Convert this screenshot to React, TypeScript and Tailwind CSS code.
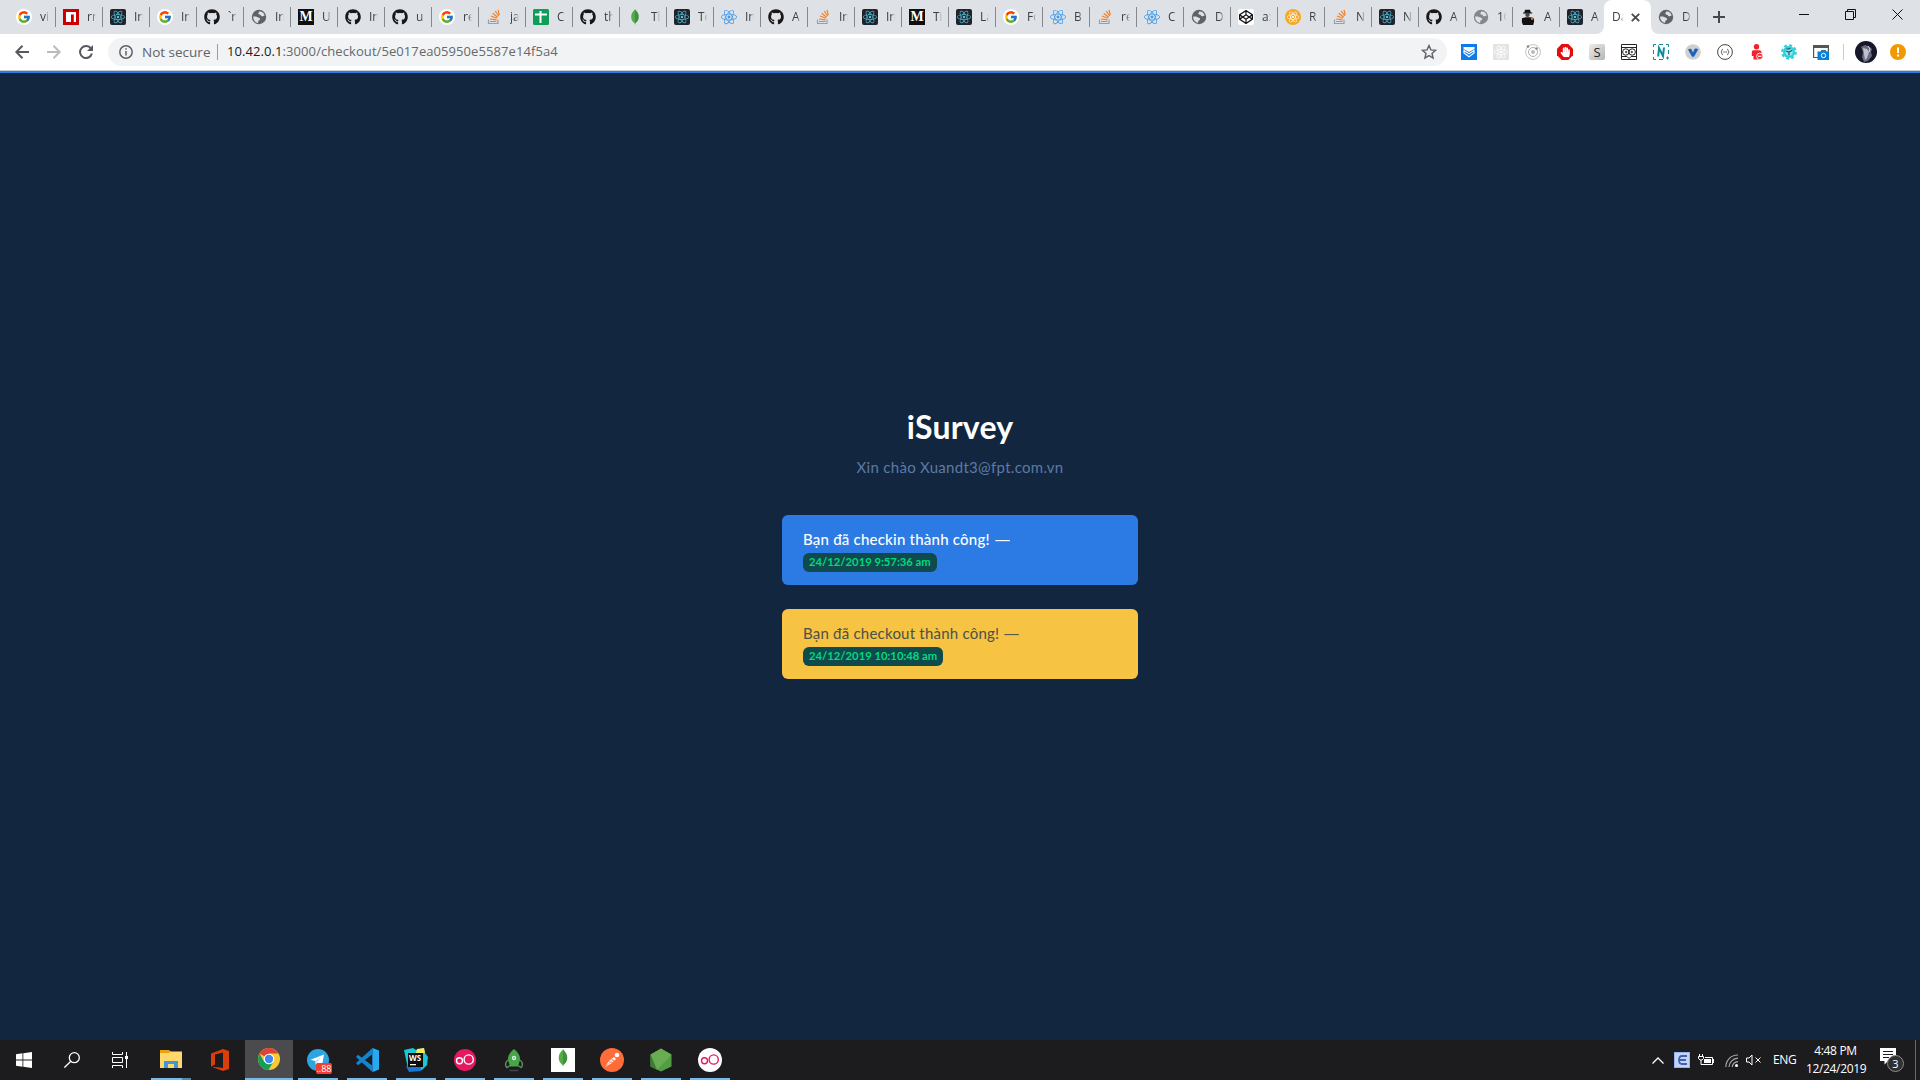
import React from "react";
import { FaGithub, FaCodepen, FaHandPaper } from "react-icons/fa";
import { FcGoogle } from "react-icons/fc";
import { SiReact } from "react-icons/si";

type Kind =
  | "google" | "npm" | "reactDark" | "reactBlue" | "github" | "globe" | "globeLight" | "medium"
  | "so" | "sheets" | "mongo" | "codepen" | "orange" | "butler";

const tabs: [Kind, string][] = [
  ["google", "vi"], ["npm", "rn"], ["reactDark", "In"], ["google", "In"], ["github", "`r"], ["globe", "In"],
  ["medium", "U"], ["github", "In"], ["github", "u"], ["google", "re"], ["so", "ja"], ["sheets", "C"],
  ["github", "th"], ["mongo", "Th"], ["reactDark", "Te"], ["reactBlue", "In"], ["github", "A"], ["so", "In"],
  ["reactDark", "In"], ["medium", "Ti"], ["reactDark", "La"], ["google", "Fo"], ["reactBlue", "B"], ["so", "re"],
  ["reactBlue", "C"], ["globe", "D"], ["codepen", "ax"], ["orange", "R"], ["so", "N"], ["reactDark", "N"],
  ["github", "A"], ["globeLight", "10"], ["butler", "A"], ["reactDark", "A"],
];

function Globe({ color }: { color: string }) {
  return (
    <svg width="16" height="16" viewBox="0 0 16 16">
      <circle cx="8" cy="8" r="7.2" fill={color} />
      <path d="M8.500 2.200c2.600.2 4.700 2 5.200 4.300-1.300.2-1.700 1-2.900.7-1-.3-.7-1.400-1.700-1.500-1.100-.1-1.900-.5-1.700-1.500.1-.8 1-.9 1.100-2zM2.100 7.600c1.900.1 2.800-.2 4 .5 1.300.8 2.900.6 3 1.900.1 1.200-1.500 1.100-1.800 2.200-.2.700.1 1.200-.2 1.700-2.800-.2-5-2.900-5-6.300z" fill="#dee1e6" />
    </svg>
  );
}

function Fav({ kind }: { kind: Kind }) {
  switch (kind) {
    case "google":
      return <span className="flex size-4 items-center justify-center rounded-full bg-white"><FcGoogle size={14} /></span>;
    case "npm":
      return <svg width="16" height="16" viewBox="0 0 16 16"><path fill="#cb0000" d="M0 0h16v16H0z" /><path fill="#fff" d="M3 3h10v10h-2.200V5.500H8V13H3z" /></svg>;
    case "reactDark":
      return <span className="flex size-4 items-center justify-center rounded-xs bg-[#20232a]"><SiReact size={14} color="#53c1de" /></span>;
    case "reactBlue":
      return <SiReact size={16} color="#3d9bf0" />;
    case "github":
      return <FaGithub size={16} color="#191717" />;
    case "globe":
      return <Globe color="#5f6368" />;
    case "globeLight":
      return <Globe color="#85878a" />;
    case "medium":
      return <span className="flex size-4 items-center justify-center bg-[#12100e] font-['Liberation_Serif',serif] text-[14px] leading-none font-bold text-white">M</span>;
    case "so":
      return (
        <svg width="16" height="16" viewBox="0 0 16 16" fill="none">
          <path d="M2.500 10.500v4h9.500v-4" stroke="#9b9fa4" strokeWidth="1.200" />
          <path d="M4 12.500h6.500M4.100 10l6.400.9M4.900 7l6 2.200M6.700 4.200l5 4M9.200 2l3.500 5M12 .8l1.300 5.400" stroke="#f48024" strokeWidth="1.200" />
        </svg>
      );
    case "sheets":
      return <svg width="16" height="16" viewBox="0 0 16 16"><rect width="16" height="16" rx="1.500" fill="#0f9d58" /><path fill="#fff" d="M2 4.500h4.500V2h2v2.500H14v2H8.500V14h-2V6.500H2z" /></svg>;
    case "mongo":
      return <Leaf size={16} />;
    case "codepen":
      return <span className="flex size-4 items-center justify-center rounded-xs bg-white"><FaCodepen size={14} color="#111" /></span>;
    case "orange":
      return <span className="flex size-4 items-center justify-center rounded-full bg-[#f9a825]"><SiReact size={12} color="#fff" /></span>;
    case "butler":
      return (
        <svg width="16" height="16" viewBox="0 0 16 16">
          <path fill="#111" d="M5 .8h5l.8 2.700h1.400v1H3v-1h1.400zM2 9.300C4 7.800 12 7.800 13.500 9l.7 3-1 4H3L1.800 13z" />
          <circle cx="7.500" cy="5.800" r="2.200" fill="#4b4642" />
          <circle cx="12" cy="9.800" r="1.200" fill="#e6682e" />
        </svg>
      );
  }
}

function Leaf({ size }: { size: number }) {
  return (
    <svg width={size} height={size} viewBox="0 0 16 16">
      <path d="M8 .3C10.500 3 12 5 11.800 8.500 11.500 11.500 10 13 8.400 14.200L8 15.900z" fill="#3f9142" />
      <path d="M8 .3C5.500 3 4 5 4.200 8.500 4.500 11.500 6 13 7.600 14.200L8 15.900z" fill="#54ab47" />
    </svg>
  );
}

function Tab({ kind, text }: { kind: Kind; text: string }) {
  return (
    <div className="flex h-5 w-[47px] shrink-0 items-center gap-2 border-r border-[#85888d] pl-[7px]">
      <span className="flex size-4 shrink-0"><Fav kind={kind} /></span>
      <span className="w-[9px] overflow-hidden text-xs leading-4 whitespace-nowrap text-[#3c4043] [mask-image:linear-gradient(to_right,black_55%,transparent)]">
        {text}
      </span>
    </div>
  );
}

function TabStrip() {
  return (
    <div className="flex h-[34px] bg-[#dee1e6]">
      <div className="flex h-[34px] w-[1604px] items-center overflow-hidden pl-[9px]">
        {tabs.map(([k, t], i) => <Tab key={i} kind={k} text={t} />)}
      </div>
      <div className="relative flex h-[34px] w-[47px] items-center rounded-t-lg bg-white pl-2">
        <svg className="absolute bottom-0 -left-2" width="8" height="8" viewBox="0 0 8 8" fill="#fff"><path d="M8 0v8H0a8 8 0 0 0 8-8z" /></svg>
        <svg className="absolute -right-2 bottom-0" width="8" height="8" viewBox="0 0 8 8" fill="#fff"><path d="M0 0v8h8a8 8 0 0 1-8-8z" /></svg>
        <span className="w-[12px] overflow-hidden text-xs leading-4 whitespace-nowrap text-[#3c4043] [mask-image:linear-gradient(to_right,black_60%,transparent)]">Da</span>
        <svg className="ml-[7px]" width="9" height="9" viewBox="0 0 9 9" stroke="#45484d" strokeWidth="1.800"><path d="M.8.8l7.400 7.400M8.200.8L.8 8.200" /></svg>
      </div>
      <div className="flex items-center"><Tab kind="globe" text="D" /></div>
      <svg className="mt-[11px] ml-[15px]" width="12" height="12" viewBox="0 0 12 12" stroke="#45484d" strokeWidth="2"><path d="M6 0v12M0 6h12" /></svg>
      <div className="mt-[9px] ml-auto flex gap-9 pr-[17px]">
        <svg width="10" height="11" viewBox="0 0 10 11" stroke="#111"><path d="M0 5.500h10" /></svg>
        <svg width="11" height="11" viewBox="0 0 11 11" stroke="#111" fill="none"><path d="M.5 2.500h8v8h-8zM2.500 2.500v-2h8v8h-2" /></svg>
        <svg width="11" height="11" viewBox="0 0 11 11" stroke="#111"><path d="M.5.5l10 10M10.500.5l-10 10" /></svg>
      </div>
    </div>
  );
}

function Extensions() {
  return (
    <div className="flex items-center gap-4">
      <svg width="16" height="16" viewBox="0 0 16 16" fill="none"><path fill="#0f7bea" d="M0 0h16v16H0z" /><path fill="#fff" d="M2.500 3h11v2L8 8 2.500 5z" /><path d="M3 6.500V9l5 3.700L13 9V6.500L8 9.800z" stroke="#fff" strokeWidth="1.200" /></svg>
      <span className="flex size-4 items-center justify-center bg-[#e4e4e4]"><SiReact size={14} color="#fff" /></span>
      <svg width="16" height="16" viewBox="0 0 16 16" fill="none" stroke="#c4c4c4"><circle cx="8" cy="8" r="7.400" /><circle cx="8" cy="8" r="4.500" stroke="#b0b0b0" /><circle cx="8" cy="8" r="2" fill="#bbb" stroke="none" /><circle cx="3" cy="2.500" r="1.300" fill="#888" stroke="none" /><circle cx="11.500" cy="4.500" r="1.300" fill="#888" stroke="none" /></svg>
      <svg width="16" height="16" viewBox="0 0 16 16"><path fill="#e40d0d" d="M4.700 0h6.600L16 4.700v6.600L11.300 16H4.700L0 11.300V4.700z" /><g transform="translate(3 2.700)"><FaHandPaper size={10.500} color="#fff" /></g></svg>
      <span className="flex size-4 items-center justify-center rounded-xs bg-linear-to-br from-[#eee] to-[#b5b5b5] text-[13px] leading-none text-[#222]">S</span>
      <svg width="16" height="16" viewBox="0 0 16 16" fill="none" stroke="#222"><path d="M.5.5h15v15H.5zM0 3.500h16M0 12.500h6l2 2 2-2h6" /><circle cx="4.800" cy="8" r="3.200" fill="#fff" /><circle cx="11.200" cy="8" r="3.200" fill="#fff" /><circle cx="5.200" cy="8" r=".7" /><circle cx="10.800" cy="8" r=".7" /></svg>
      <svg width="16" height="16" viewBox="0 0 16 16" fill="none" stroke="#108b99"><path d="M3 .5H.5V3M6 .5h4M13 .5h2.500V3M.5 6v4M15.500 6v4M.5 13v2.500H3M6 15.500h4M14.500 12.500v3M13 14h3" /><path d="M5.200 12.500L6 4l4 8 1-8.500" strokeWidth="2" /></svg>
      <svg width="16" height="16" viewBox="0 0 16 16"><circle cx="8" cy="8" r="7.800" fill="#cfcfcf" /><path d="M3 5.500c2-1 3.300-.8 3.800.5L8 8.500 9.500 5c1-.8 2.500-.5 3.800.2L9 12.800H7z" fill="#1c63bd" /></svg>
      <svg width="16" height="16" viewBox="0 0 16 16" fill="none" stroke="#444"><circle cx="8" cy="8" r="7.400" /><path d="M5.800 5.200c-1.500 0-.5 2.500-1.900 2.800 1.400.3.400 2.800 1.900 2.800M10.200 5.200c1.500 0 .5 2.500 1.900 2.800-1.400.3-.4 2.800-1.900 2.800" strokeWidth=".9" /><path d="M6.300 8h3.600" strokeDasharray="1 .3" /></svg>
      <svg width="16" height="16" viewBox="0 0 16 16"><g fill="#f5222d"><circle cx="7.500" cy="2.800" r="2.700" /><path d="M4.500 6.300h6Q12.500 6.300 12.500 8v3H11v4.500H4.500v-3.500H2.800V8Q2.800 6.300 4.500 6.300z" /></g><circle cx="10.800" cy="12.300" r="3.200" fill="#f5222d" stroke="#fff" strokeWidth=".9" /><path d="M9 12.300h3.600" stroke="#fff" strokeWidth="1.200" /></svg>
      <svg width="16" height="16" viewBox="0 0 16 16" fill="none"><circle cx="8" cy="8" r="6.800" stroke="#27cfdc" strokeWidth="2" strokeDasharray="3 2.340" /><circle cx="8" cy="8" r="6" fill="#27cfdc" /><circle cx="8" cy="8" r="3.800" fill="#8fe9ee" /><path d="M4.800 7L8 8l3.200-1.800M8 8v3.200M5.500 5.200l4-.5" stroke="#165f76" strokeWidth="1.300" /></svg>
      <svg width="16" height="16" viewBox="0 0 16 16"><path d="M.6 1.500h14.800v12H.6z" fill="#fff" stroke="#555" strokeWidth="1.200" /><path fill="#555" d="M0 1h16v3H0z" /><path fill="#0d7fd3" d="M4.500 7.500h3l1-1.500h4l1 1.500H16V16H4.500z" /><circle cx="10.500" cy="11.500" r="2.200" fill="none" stroke="#fff" /></svg>
    </div>
  );
}

function Toolbar() {
  return (
    <div className="flex h-9 items-center bg-white pr-[14px] pl-[15px]">
      <svg width="14" height="14" viewBox="0 0 14 14" fill="none" stroke="#55585d" strokeWidth="2"><path d="M14 7H1.500M7.500.7L1.300 7l6.200 6.300" /></svg>
      <svg className="ml-[18px]" width="14" height="14" viewBox="0 0 14 14" fill="none" stroke="#b9bbbe" strokeWidth="2"><path d="M0 7h12.500M6.500.7L12.700 7l-6.200 6.300" /></svg>
      <svg className="ml-[18px]" width="14" height="14" viewBox="0 0 14 14" fill="none"><path d="M12 3.600A6 6 0 1 0 12.900 8.500" stroke="#55585d" strokeWidth="2" /><path d="M14 0v6H8z" fill="#55585d" /></svg>
      <div className="ml-[15px] flex h-7 w-[1339px] items-center rounded-full bg-[#f1f3f4] pr-[10px] pl-[11px]">
        <svg width="14" height="14" viewBox="0 0 14 14" fill="none" stroke="#5f6368" strokeWidth="1.500"><circle cx="7" cy="7" r="6.200" /><path d="M7 6v4.500M7 3.300v1.500" /></svg>
        <span className="ml-[9px] w-[67px] text-[13.500px] whitespace-nowrap text-[#5f6368]">Not secure</span>
        <span className="ml-2 h-4 w-px bg-[#9a9da1]" />
        <span className="ml-[9px] text-[13px] tracking-[0.08px] whitespace-nowrap text-[#65696e]"><span className="text-[#202124]">10.42.0.1</span>:3000/checkout/5e017ea05950e5587e14f5a4</span>
        <svg className="ml-auto" width="16" height="16" viewBox="0 0 16 16" fill="none" stroke="#5f6368" strokeWidth="1.400"><path d="M8 1.500l1.900 4.400 4.700.4-3.600 3.100 1.100 4.700L8 11.600l-4.100 2.500L5 9.400 1.400 6.300l4.700-.4z" /></svg>
      </div>
      <div className="ml-[14px]"><Extensions /></div>
      <span className="ml-[14px] h-4 w-px bg-[#c8cacd]" />
      <svg className="ml-[11px]" width="22" height="22" viewBox="0 0 22 22"><circle cx="11" cy="11" r="11" fill="#17172a" /><path d="M6 6l4-2 4 1.500 3 2.500-1 3 1 4-4 5-4 1-2-5 1-5z" fill="#6b6b82" /><path d="M8 7l4 1 2 3-2 6-2 2z" fill="#c0c0d0" /><path d="M13 5l2 3-1 3" fill="none" stroke="#dcdce6" /></svg>
      <svg className="ml-[13px]" width="16" height="16" viewBox="0 0 16 16"><circle cx="8" cy="8" r="8" fill="#f29900" /><path fill="#fff" d="M7 3.500h2v5.500H7zM7 10.500h2v2H7z" /></svg>
    </div>
  );
}

function Alert({ className, msg, time }: { className: string; msg: string; time: string }) {
  return (
    <div className={className}>
      <div className="h-[22px] text-[15px] leading-[22px] tracking-[0.220px] whitespace-nowrap">
        {msg} <span className="inline-block origin-left scale-x-145">—</span>
      </div>
      <span className="mt-[3px] inline-flex h-[19px] items-center self-start rounded-md bg-[#0f4a4d] px-[6px] text-[11.250px] font-bold whitespace-nowrap text-[#00d97e]">{time}</span>
    </div>
  );
}

function Content() {
  return (
    <main className="flex grow flex-col items-center bg-[#12263f] pt-[334px] font-[Lato,'Noto_Sans',sans-serif]">
      <h1 className="h-[39px] text-[32px] leading-[39px] font-bold tracking-[0.2px] text-white">iSurvey</h1>
      <p className="mt-[10px] h-[22px] text-[15px] leading-[22px] tracking-[0.300px] text-[#5d7aa5]">Xin chào Xuandt3@fpt.com.vn</p>
      <Alert className="mt-[37px] flex h-[70px] w-[356px] flex-col rounded-md bg-[#2c7be5] px-[21px] pt-[13px] font-medium text-white" msg="Bạn đã checkin thành công!" time="24/12/2019 9:57:36 am" />
      <Alert className="mt-6 flex h-[70px] w-[356px] flex-col rounded-md bg-[#f6c343] px-[21px] pt-[13px] text-[#4b5047]" msg="Bạn đã checkout thành công!" time="24/12/2019 10:10:48 am" />
    </main>
  );
}

function Chrome() {
  return (
    <svg width="22" height="22" viewBox="0 0 22 22">
      <circle cx="11" cy="11" r="11" fill="#fbc934" />
      <path d="M11 11L1.500 5.500A11 11 0 0 1 20.500 5.500H11z" fill="#db4437" />
      <path d="M1.500 5.500A11 11 0 0 0 10.500 22l5-8.500L11 11 6.200 13.700z" fill="#149e57" />
      <circle cx="11" cy="11" r="5.300" fill="#fff" /><circle cx="11" cy="11" r="4.200" fill="#4285f4" />
    </svg>
  );
}

function Rings({ bg, fg, r }: { bg: string; fg: string; r: number }) {
  return (
    <svg width="24" height="24" viewBox="0 0 24 24" fill="none" stroke={fg} strokeWidth="1.400">
      <circle cx="12" cy="12" r={r} fill={bg} stroke="none" /><circle cx="6.500" cy="12.800" r="3" /><circle cx="15.700" cy="11.500" r="4.600" />
    </svg>
  );
}

function Telegram() {
  return (
    <span className="relative flex size-6 items-center pl-px">
      <svg width="22" height="22" viewBox="0 0 22 22"><circle cx="11" cy="11" r="11" fill="#2ca5e0" /><path fill="#fff" d="M3.500 10.800L17 5.500 15 16.500l-4-3-2.200 2.200-.5-3.700z" /><path d="M8.300 12L14 8l-4.500 5.200-.7 2.500z" fill="#b5d5ea" /></svg>
      <span className="absolute top-[15px] left-[10px] flex h-[11px] w-4 items-center justify-center rounded-xs bg-[#f23c34] text-[9px] leading-none text-white">..88</span>
    </span>
  );
}

const apps: React.ReactNode[] = [
  <Telegram key="t" />,
  <svg key="v" width="24" height="24" viewBox="0 0 24 24"><path d="M17.500 0L1 15l2 2.200L19 5v14L3 6.800 1 9l16.500 15z" fill="#1384cf" /><path d="M17.500 0L24 2.500v19L17.500 24z" fill="#27a9f2" /></svg>,
  <svg key="w" width="24" height="24" viewBox="0 0 24 24"><path fill="#17c8d8" d="M0 2l9-2 3 2 8-2 1 5 3 4-1 8-5 5-14-1z" /><path fill="#f4ec57" d="M13 1l7-1 1 5h-9z" /><path fill="#1877d2" d="M2 18h15v5L5 24z" /><path fill="#0b0b0b" d="M4 5h15v14H4z" /><text x="5" y="13" fontSize="8" fontWeight="700" fill="#fff">WS</text><path fill="#fff" d="M6 16h6v1.300H6z" /></svg>,
  <Rings key="r" bg="#e5195f" fg="#fff" r={11} />,
  <svg key="k" width="24" height="24" viewBox="0 0 24 24"><path d="M12 1c4 3 6.500 7 6 11L16 18.500H8L6 12C5.500 8 8 4 12 1z" fill="#46a546" /><path d="M6 12c-3 2-3 6-1 7.500l3-2M18 12c3 2 3 6 1 7.500l-3-2" fill="none" stroke="#5b8a5e" strokeWidth="1.500" /><circle cx="12" cy="10" r="2.200" fill="#d8eee0" /><circle cx="12" cy="10" r="1" fill="#7ab5a0" /><path d="M7.500 22.500h9" stroke="#444" strokeWidth="1.500" /></svg>,
  <span key="m" className="flex size-6 items-start justify-center bg-white pt-px"><Leaf size={18} /></span>,
  <svg key="p" width="24" height="24" viewBox="0 0 24 24"><circle cx="12" cy="12" r="12" fill="#ff6c37" /><path d="M5 19l4-6 5-4 2 2-5 4.500z" fill="#fff" /><circle cx="17" cy="7" r="2.300" fill="#fff" /><path d="M8 13l4 2M11 10.500l3 2.500M5.500 18.500l8-7" stroke="#ff8a60" strokeWidth=".9" /></svg>,
  <svg key="n" width="24" height="24" viewBox="0 0 24 24"><path fill="#539e43" d="M12 .5l10.500 6v12L12 23.500l-10.500-5v-12z" /><path fill="#78b75f" d="M12 .5l10.500 6L8 22l-6.500-15.500z" opacity=".6" /><path fill="#3c7d36" d="M1.500 6.500L8 22l-6.500-3.500z" /></svg>,
  <Rings key="q" bg="#fff" fg="#e5195f" r={12} />,
];

function Taskbar() {
  return (
    <footer className="flex h-10 shrink-0 bg-[#1c1c1f] text-white">
      <div className="flex w-12 items-center justify-center"><svg width="16" height="16" viewBox="0 0 16 16" fill="#fff"><path d="M0 2.200L6.500 1.300v6.300H0zM7.300 1.200L16 0v7.600H7.300zM0 8.400h6.500v6.300L0 13.800zM7.300 8.400H16V16l-8.700-1.200z" /></svg></div>
      <div className="flex w-12 items-center justify-center"><svg width="16" height="16" viewBox="0 0 16 16" fill="none" stroke="#fff" strokeWidth="1.300"><circle cx="10.300" cy="5.700" r="5" /><path d="M6.800 9.200L.4 15.600" /></svg></div>
      <div className="flex w-12 items-center justify-center"><svg width="17" height="16" viewBox="0 0 17 16" fill="none" stroke="#fff"><path d="M.5 0v2.500h10V0M.5 5.500h10v5H.5zM.5 16v-2.500h10V16M14.500 0v16" /><path fill="#fff" stroke="none" d="M13 4h3v3h-3z" /></svg></div>
      <div className="flex w-[54px] flex-col items-center">
        <span className="flex h-[38px] items-center"><svg width="22" height="18" viewBox="0 0 22 18"><path fill="#e5a313" d="M0 0h9l2 2v5H0z" /><path fill="#ffd76a" d="M0 3h9l1-1.500h12V18H0z" /><path fill="#3f97d8" d="M4 18v-7h14v7h-4v-4H8v4z" /></svg></span>
        <span className="flex h-0.5 w-10"><span className="w-[31px] bg-[#76b9ed]" /><span className="w-[9px] bg-[#5a86ab]" /></span>
      </div>
      <div className="flex w-[47px] items-center justify-center pr-[3px]"><svg width="18" height="22" viewBox="0 0 18 22"><path fill="#dc3e0a" d="M0 4.500L12 0l6 2v18l-6 2L0 17.500l12 1.500V3.500L4 5.500v10L0 17.500z" /></svg></div>
      <div className="flex w-12 flex-col items-center bg-[#4b4b4d]"><span className="flex h-[38px] items-center"><Chrome /></span><span className="h-0.5 w-full bg-[#76b9ed]" /></div>
      <div className="ml-[5px] flex gap-[9px]">
        {apps.map((a, i) => (
          <div key={i} className="flex w-10 flex-col items-center"><span className="flex h-[38px] items-center pt-0.5">{a}</span><span className="h-0.5 w-full bg-[#76b9ed]" /></div>
        ))}
      </div>
      <div className="ml-auto flex items-center">
        <svg width="12" height="7" viewBox="0 0 12 7" fill="none" stroke="#fff" strokeWidth="1.300"><path d="M.5 6.500L6 1l5.500 5.500" /></svg>
        <span className="ml-[10px] flex size-4 items-center justify-center border border-[#96b5ee] bg-[#c4d3f8]"><svg width="9" height="10" viewBox="0 0 9 10" fill="none" stroke="#4261a8" strokeWidth="1.800"><path d="M9 1H4Q1 1 1 5t3 4h5M1 5h7" /></svg></span>
        <svg className="ml-2" width="16" height="12" viewBox="0 0 16 12" fill="none" stroke="#fff"><path d="M1.500 0v2.500M4.500 0v2.500M.5 2.500h5v2l-1.500 1.500H2L.5 4.500zM3 6v4.500h11.500v-7H7" /><path fill="#fff" stroke="none" d="M6 5h7v4H6zM15 5h1v4h-1z" /></svg>
        <svg className="ml-[11px]" width="13" height="13" viewBox="0 0 13 13" fill="none" stroke="#aaa" strokeWidth="1.200"><path d="M.8 13C1 6 6 1 13 1M4 13c.3-5 4-8.500 9-8.800M7.300 13c.3-3 2.500-5.200 5.700-5.400" /><circle cx="11.500" cy="11.500" r="1.500" fill="#fff" stroke="none" /></svg>
        <svg className="ml-2" width="15" height="12" viewBox="0 0 15 12" fill="none" stroke="#fff"><path d="M.5 4H3l3-3v10L3 8H.5zM9.500 3.500l5 5M14.500 3.500l-5 5" /></svg>
        <span className="ml-3 w-[23px] text-xs tracking-[-0.400px]">ENG</span>
        <div className="ml-[10px] w-[59px] text-center text-xs leading-[18px] tracking-[-0.350px] whitespace-nowrap">4:48 PM<br />12/24/2019</div>
        <span className="relative ml-[15px] h-6 w-6">
          <svg width="24" height="24" viewBox="0 0 24 24"><path fill="#fff" d="M0 0h16v13H8l-3.500 3.500V13H0z" /><path d="M3 3.500h10M3 6.500h10M3 9.500h6" stroke="#1c1c1f" /><circle cx="15.500" cy="15.500" r="8" fill="#303033" stroke="#8c8c8c" /></svg>
          <span className="absolute top-2 left-2 w-[15px] text-center text-[11px] leading-[15px]">3</span>
        </span>
        <span className="ml-[11px] h-10 w-px bg-[#6a6a6c]" />
        <span className="w-1" />
      </div>
    </footer>
  );
}

export default function App() {
  return (
    <div className="flex h-[1080px] w-[1920px] flex-col overflow-hidden font-['Open_Sans','Noto_Sans',sans-serif]">
      <TabStrip />
      <Toolbar />
      <div className="h-[3px] shrink-0 border-t border-[#c9ccd1] bg-[#2c7be5]" />
      <Content />
      <Taskbar />
    </div>
  );
}
